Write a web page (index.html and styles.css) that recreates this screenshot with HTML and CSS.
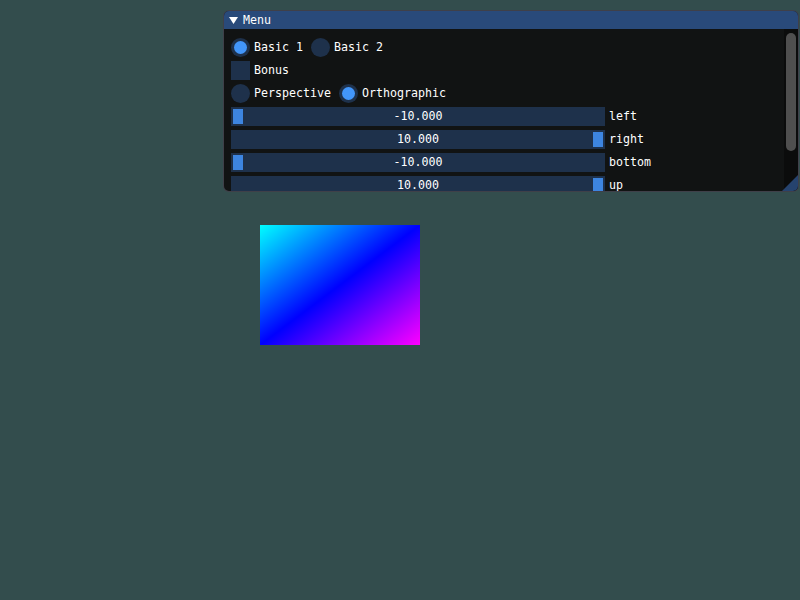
FILE: index.html
```html
<!DOCTYPE html>
<html>
<head>
<meta charset="utf-8">
<link rel="stylesheet" href="styles.css">
</head>
<body>
<div class="canvas">
  <div class="window">
    <div class="titlebar">
      <svg class="arrow" width="9" height="7" viewBox="0 0 9 7"><polygon points="0,0 9,0 4.5,7" fill="#fff"/></svg>
      <span>Menu</span>
    </div>
    <div class="body">
      <div class="content">
        <div class="row">
          <div class="radio on"></div><span class="label">Basic 1</span>
          <div class="radio"></div><span class="label">Basic 2</span>
        </div>
        <div class="row">
          <div class="check"></div><span class="label">Bonus</span>
        </div>
        <div class="row">
          <div class="radio"></div><span class="label">Perspective</span>
          <div class="radio on"></div><span class="label">Orthographic</span>
        </div>
        <div class="row">
          <div class="slider"><div class="track start"><div class="grab"></div></div><div class="value">-10.000</div></div><span class="label">left</span>
        </div>
        <div class="row">
          <div class="slider"><div class="track end"><div class="grab"></div></div><div class="value">10.000</div></div><span class="label">right</span>
        </div>
        <div class="row">
          <div class="slider"><div class="track start"><div class="grab"></div></div><div class="value">-10.000</div></div><span class="label">bottom</span>
        </div>
        <div class="row">
          <div class="slider"><div class="track end"><div class="grab"></div></div><div class="value">10.000</div></div><span class="label">up</span>
        </div>
      </div>
      <div class="scrollbar"><div class="sgrab"></div></div>
    </div>
    <div class="grip"></div>
  </div>
  <div class="quad"></div>
</div>
</body>
</html>
```

FILE: styles.css
```css
html, body {
  margin: 0;
  padding: 0;
  background: #334d4d;
  width: 800px;
  height: 600px;
  overflow: hidden;
}
.canvas {
  position: relative;
  width: 800px;
  height: 600px;
  font-family: "DejaVu Sans Mono", "Liberation Mono", monospace;
  font-size: 11.63px;
  color: #ffffff;
}
.window {
  position: absolute;
  left: 223px;
  top: 10px;
  width: 576px;
  height: 182px;
  box-sizing: border-box;
  background: #111313;
  border: 1px solid rgba(110, 110, 128, 0.5);
  border-radius: 6px;
  overflow: hidden;
  display: flex;
  flex-direction: column;
}
.titlebar {
  height: 18px;
  flex: none;
  background: #294a7a;
  display: flex;
  align-items: center;
  padding-left: 5px;
  gap: 5px;
  line-height: 18px;
}
.arrow {
  display: block;
}
.body {
  flex: 1;
  display: flex;
  min-height: 0;
}
.content {
  flex: 1;
  padding: 9px 0 0 7px;
  display: flex;
  flex-direction: column;
  gap: 4px;
  overflow: hidden;
}
.row {
  display: flex;
  align-items: center;
  height: 19px;
  flex: none;
}
.label {
  margin-left: 4px;
  margin-right: 8px;
  line-height: 19px;
  white-space: pre;
}
.radio {
  width: 19px;
  height: 19px;
  border-radius: 50%;
  background: #1e314b;
  display: flex;
  align-items: center;
  justify-content: center;
  flex: none;
}
.radio.on::after {
  content: "";
  width: 13px;
  height: 13px;
  border-radius: 50%;
  background: #4296fa;
}
.check {
  width: 19px;
  height: 19px;
  background: #1e314b;
  flex: none;
}
.slider {
  width: 374px;
  height: 19px;
  background: #1e314b;
  display: grid;
  flex: none;
}
.track {
  grid-area: 1 / 1;
  display: flex;
  align-items: center;
  padding: 0 2px;
}
.track.end {
  justify-content: flex-end;
}
.grab {
  width: 10px;
  height: 15px;
  background: #3d85e0;
}
.value {
  grid-area: 1 / 1;
  text-align: center;
  line-height: 19px;
}
.scrollbar {
  width: 14px;
  flex: none;
  background: #0b0c0c;
  padding: 4px 2px 0 2px;
  box-sizing: border-box;
}
.sgrab {
  width: 10px;
  height: 118px;
  border-radius: 5px;
  background: #4f4f4f;
}
.grip {
  position: absolute;
  right: 0;
  bottom: 0;
  width: 16px;
  height: 16px;
  background: #26436e;
  clip-path: polygon(100% 0, 100% 100%, 0 100%);
}
.quad {
  position: absolute;
  left: 260px;
  top: 225px;
  width: 160px;
  height: 120px;
  background: linear-gradient(to bottom right, #00ffff, #0000ff, #ff00ff);
}
```
